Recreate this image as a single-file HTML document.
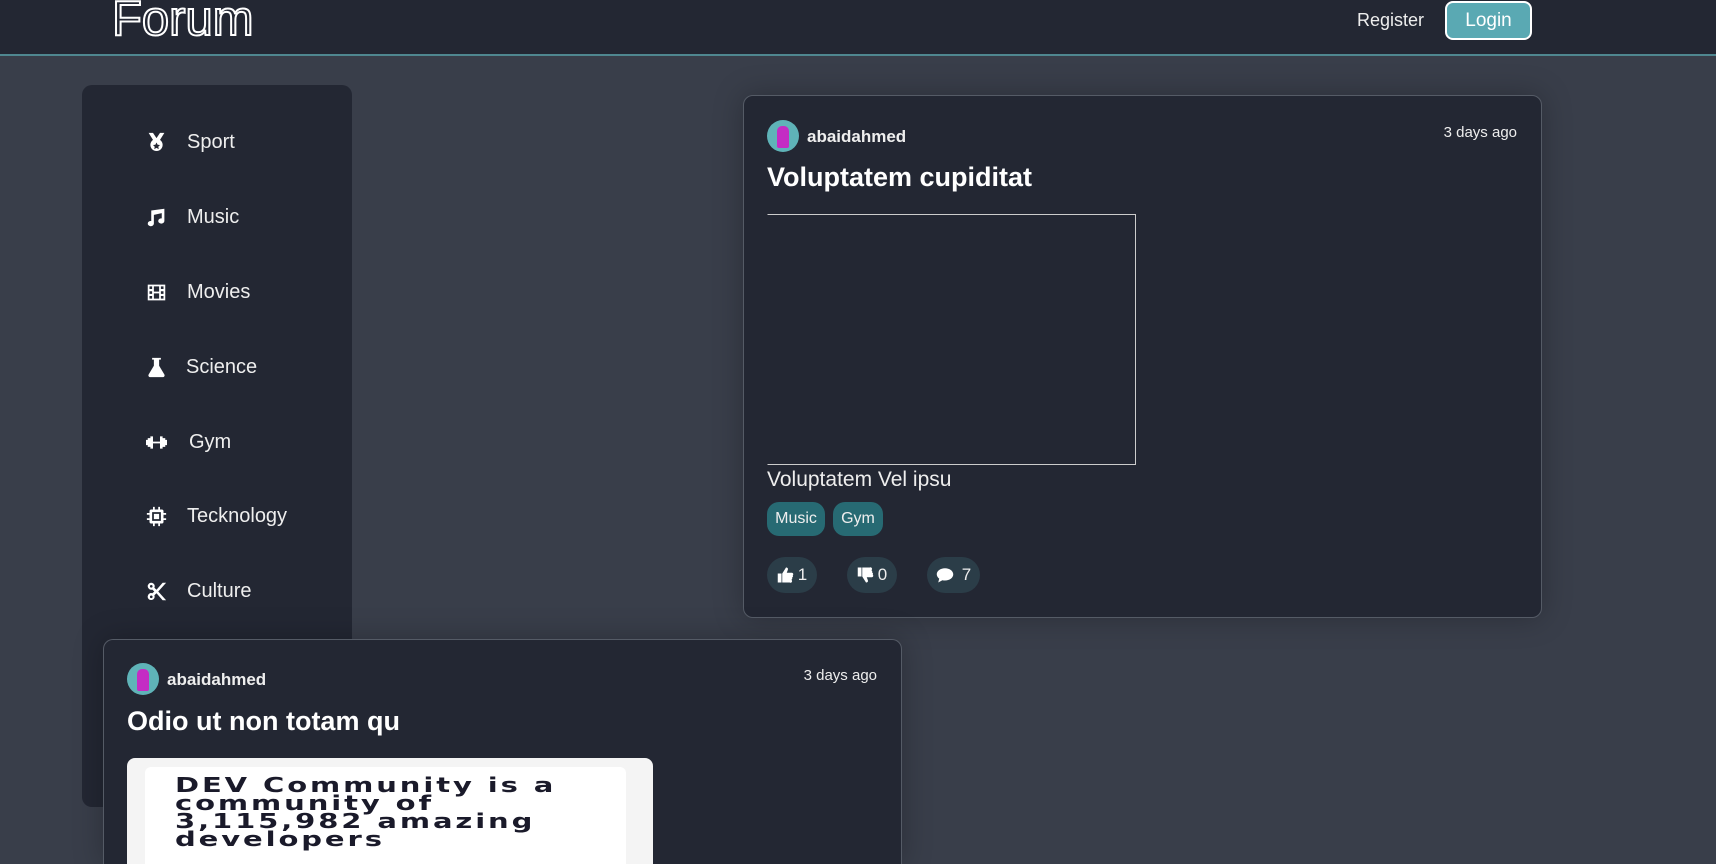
<!DOCTYPE html>
<html><head><meta charset="utf-8"><style>
*{box-sizing:border-box;margin:0;padding:0}
html,body{width:1716px;height:864px;overflow:hidden}
body{background:#393e4a;font-family:"Liberation Sans",sans-serif;color:#fff;position:relative}
#wrap{position:absolute;left:0;top:0;width:1716px;height:864px;overflow:hidden}
.hdr{position:absolute;left:0;top:0;width:1716px;height:56px;background:#232733;border-bottom:2px solid #4f8790}
.logo{position:absolute;left:112px;top:-9px;font-size:49px;color:#232733;-webkit-text-stroke:2px #fff}
.reg{position:absolute;left:1357px;top:10px;font-size:18px;color:#eee}
.login{position:absolute;left:1445px;top:1px;width:87px;height:39px;border:2px solid #fff;border-radius:8px;background:#5aa9b3;font-size:19px;text-align:center;line-height:35px}
.side{position:absolute;left:82px;top:85px;width:270px;height:722px;background:#232733;border-radius:10px}
.item{position:absolute;left:0;height:30px;display:flex;align-items:center;font-size:20px;color:#eee}
.item svg{position:absolute;left:64px;width:21px;height:21px;fill:#fff}
.item span{position:absolute;left:105px;white-space:nowrap}
.card{position:absolute;background:#232733;border:1px solid #555b66;border-radius:10px;box-shadow:0 0 30px rgba(0,0,0,.25)}
.av{position:absolute;width:32px;height:32px;border-radius:50%;background:#5fb3b8;overflow:hidden}
.av i{position:absolute;left:10px;top:6px;width:12px;height:22px;background:#c42cc4;border-radius:5px 5px 2px 2px}
.un{position:absolute;font-size:17px;font-weight:bold;color:#eee}
.date{position:absolute;font-size:15px;color:#eee}
.ttl{position:absolute;font-size:27px;font-weight:bold;white-space:nowrap}
.tag{position:absolute;top:502px;height:34px;background:#276a73;border-radius:12px;font-size:16px;line-height:34px;text-align:center;color:#eee}
.btn{position:absolute;top:557px;height:36px;background:#2b3d48;border-radius:18px;font-size:17px;line-height:36px;display:flex;align-items:center;justify-content:center;gap:3px;color:#eee}
.btn svg{width:18px;height:18px;fill:#fff}
</style></head><body><div id="wrap">
<div class="hdr"><div class="logo">Forum</div><div class="reg">Register</div><div class="login">Login</div></div>
<div class="side">
<div class="item" style="top:42px"><svg viewBox="0 0 24 24"><path fill-rule="evenodd" d="M3 1h5l4 6 4-6h5l-5 8a7 7 0 1 1-8 0z M12 12l1.3 2.6 2.7.3-2 1.9.6 2.7-2.6-1.4-2.6 1.4.6-2.7-2-1.9 2.7-.3z"/></svg><span>Sport</span></div>
<div class="item" style="top:117px"><svg viewBox="0 0 24 24"><path d="M21 2v14a3.5 3 0 1 1-3-3V7l-9 2v10a3.5 3 0 1 1-3-3V4z"/></svg><span>Music</span></div>
<div class="item" style="top:192px"><svg viewBox="0 0 24 24"><path fill-rule="evenodd" d="M2 3h20v18H2z M4 5v3h3V5z M4 10.5v3h3v-3z M4 16v3h3v-3z M17 5v3h3V5z M17 10.5v3h3v-3z M17 16v3h3v-3z M9 5v6h6V5z M9 13v6h6v-6z"/></svg><span>Movies</span></div>
<div class="item" style="top:267px"><svg viewBox="0 0 24 24"><path d="M7 1h10v2h-2v7l6 10a2 2 0 0 1-2 3H5a2 2 0 0 1-2-3l6-10V3H7z"/></svg><span style="left:104px">Science</span></div>
<div class="item" style="top:342px"><svg viewBox="0 0 24 24" style="left:62px;width:25px"><path d="M0 9h2V7h3V5h3v14H5v-2H2v-2H0z M24 9h-2V7h-3V5h-3v14h3v-2h3v-2h2z M8 11h8v2H8z"/></svg><span style="left:107px">Gym</span></div>
<div class="item" style="top:416px"><svg viewBox="0 0 24 24"><path fill-rule="evenodd" d="M8 1h2v3h4V1h2v3h2a2 2 0 0 1 2 2v2h3v2h-3v4h3v2h-3v2a2 2 0 0 1-2 2h-2v3h-2v-3h-4v3H8v-3H6a2 2 0 0 1-2-2v-2H1v-2h3v-4H1V8h3V6a2 2 0 0 1 2-2h2z M7 7v10h10V7z M9 9h6v6H9z"/></svg><span>Tecknology</span></div>
<div class="item" style="top:491px"><svg viewBox="0 0 24 24"><path fill-rule="evenodd" d="M6 2a4 4 0 0 1 3.6 5.7L12 10l7-8h4L14 12l9 10h-4l-7-8-2.4 2.3A4 4 0 1 1 7.2 14L9.5 12 7.2 9.8A4 4 0 1 1 6 2z M6 4.5a1.5 1.5 0 1 0 0 3 1.5 1.5 0 0 0 0-3z M6 16.5a1.5 1.5 0 1 0 0 3 1.5 1.5 0 0 0 0-3z"/></svg><span>Culture</span></div>
</div>

<div class="card" style="left:743px;top:95px;width:799px;height:523px">
<div class="av" style="left:23px;top:24px"><i></i></div>
<div class="un" style="left:63px;top:31px">abaidahmed</div>
<div class="date" style="right:24px;top:28px">3 days ago</div>
<div class="ttl" style="left:23px;top:66px">Voluptatem cupiditat</div>
<div style="position:absolute;left:23px;top:118px;width:369px;height:251px;border:1px solid #ccc;border-left-color:#232733"></div>
<div style="position:absolute;left:23px;top:372px;font-size:21px;color:#eee">Voluptatem Vel ipsu</div>
</div>
<div class="tag" style="left:767px;width:58px">Music</div>
<div class="tag" style="left:833px;width:50px">Gym</div>
<div class="btn" style="left:767px;width:50px"><svg viewBox="0 0 24 24"><path d="M1 10h5v12H1z M7 10l5-8c2 0 3 1 2.5 3L13 9h7a2 2 0 0 1 1 3.5 2 2 0 0 1-1 3 2 2 0 0 1-1 3 2 2 0 0 1-2 3.5H7z"/></svg>1</div>
<div class="btn" style="left:847px;width:50px"><svg viewBox="0 0 24 24"><path d="M1 2h5v12H1z M7 14l5 8c2 0 3-1 2.5-3L13 15h7a2 2 0 0 0 1-3.5 2 2 0 0 0-1-3 2 2 0 0 0-1-3A2 2 0 0 0 17 2H7z"/></svg>0</div>
<div class="btn" style="left:927px;width:53px;gap:8px"><svg viewBox="0 0 24 24"><path d="M12 3C6 3 1 6.5 1 11c0 2.3 1.3 4.3 3.3 5.8L3 22l5.5-3c1.1.3 2.3.4 3.5.4 6 0 11-3.6 11-8.2S18 3 12 3z"/></svg>7</div>

<div class="card" style="left:103px;top:639px;width:799px;height:225px;border-bottom:none;border-radius:10px 10px 0 0;overflow:hidden">
<div class="av" style="left:23px;top:23px"><i></i></div>
<div class="un" style="left:63px;top:30px">abaidahmed</div>
<div class="date" style="right:24px;top:27px">3 days ago</div>
<div class="ttl" style="left:23px;top:66px">Odio ut non totam qu</div>
<div style="position:absolute;left:23px;top:118px;width:526px;height:200px;background:#f4f4f4;border-radius:8px">
<div style="position:absolute;left:18px;top:9px;width:481px;height:200px;background:#fff;border-radius:6px;overflow:hidden">
<div style="position:absolute;left:30px;top:9px;white-space:nowrap;font-family:'DejaVu Sans',sans-serif;font-weight:bold;font-size:20px;line-height:18px;color:#1a1a2a;letter-spacing:2px;transform:scaleX(1.45);transform-origin:left top">DEV Community is a<br>community of<br>3,115,982 amazing<br>developers</div>
</div>
</div>
</div>
</div></body></html>
